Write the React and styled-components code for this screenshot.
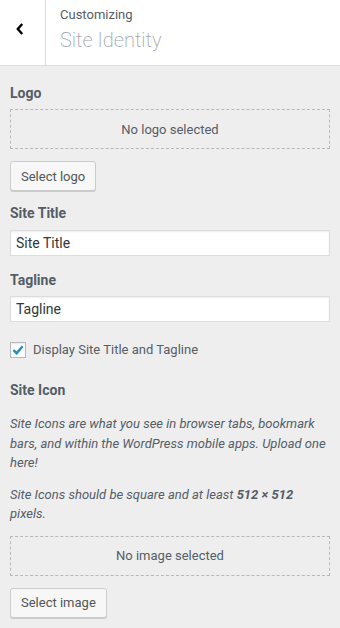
import React from "react";
import styled, { createGlobalStyle } from "styled-components";

const GlobalStyle = createGlobalStyle`
  html, body {
    margin: 0;
    padding: 0;
    background: #eee;
  }
  body {
    font-family: Roboto, "Liberation Sans", sans-serif;
    color: #555d66;
    -webkit-font-smoothing: antialiased;
  }
`;

const Panel = styled.div`
  width: 340px;
  min-height: 628px;
  background: #eee;
`;

const Header = styled.div`
  display: flex;
  height: 65px;
  background: #fff;
  border-bottom: 1px solid #ddd;
`;

const BackButton = styled.button`
  width: 46px;
  height: 65px;
  padding: 0 5px 8px 0;
  border: none;
  border-right: 1px solid #ddd;
  background: #fff;
  display: flex;
  align-items: center;
  justify-content: center;
  cursor: pointer;
`;

const TitleBlock = styled.div`
  display: flex;
  flex-direction: column;
  padding: 6px 0 0 14px;
`;

const Small = styled.span`
  font-size: 13px;
  line-height: 18px;
  color: #555d66;
`;

const Big = styled.h3`
  margin: 3px 0 0;
  font-size: 20px;
  line-height: 26px;
  font-weight: 200;
  color: #a0a5aa;
`;

const Body = styled.div`
  padding: 17px 10px 12px;
`;

const Control = styled.div`
  margin-bottom: ${(p) => p.$mb || 12}px;
`;

const Label = styled.div`
  font-size: 14px;
  line-height: 20px;
  font-weight: 700;
  color: #555d66;
  margin-bottom: ${(p) => p.$mb || 6}px;
`;

const Placeholder = styled.div`
  height: 38px;
  border: 1px dashed #b4b9be;
  display: flex;
  align-items: center;
  justify-content: center;
  font-size: 13px;
  color: #555d66;
  margin-bottom: 12px;
`;

const Button = styled.button`
  height: 30px;
  padding: 0 10px;
  font-family: inherit;
  font-size: 13px;
  color: #555;
  background: #f7f7f7;
  border: 1px solid #ccc;
  border-radius: 3px;
  box-shadow: 0 1px 0 #ccc;
  cursor: pointer;
`;

const Input = styled.input`
  display: block;
  box-sizing: border-box;
  width: 100%;
  height: 26px;
  padding: 3px 5px;
  font-family: inherit;
  font-size: 14px;
  color: #32373c;
  background: #fff;
  border: 1px solid #ddd;
  box-shadow: inset 0 1px 2px rgba(0, 0, 0, 0.07);
  outline: none;
`;

const CheckRow = styled.label`
  display: flex;
  align-items: center;
  gap: 7px;
  font-size: 13px;
  line-height: 20px;
  color: #555d66;
`;

const Box = styled.span`
  width: 16px;
  height: 16px;
  box-sizing: border-box;
  border: 1px solid #b4b9be;
  background: #fff;
  box-shadow: inset 0 1px 2px rgba(0, 0, 0, 0.1);
  display: flex;
  align-items: center;
  justify-content: center;
`;

const Desc = styled.p`
  margin: 0 0 ${(p) => p.$mb || 12}px;
  font-size: 13px;
  line-height: 19.5px;
  font-style: italic;
  color: #555d66;

  strong {
    font-weight: 700;
  }
`;

export default function App() {
  return (
    <Panel>
      <GlobalStyle />
      <Header>
        <BackButton aria-label="Back">
          <svg width="8" height="12" viewBox="0 0 8 12">
            <path
              d="M6.2 1 L1.8 6 L6.2 11"
              fill="none"
              stroke="#000"
              strokeWidth="2.4"
            />
          </svg>
        </BackButton>
        <TitleBlock>
          <Small>Customizing</Small>
          <Big>Site Identity</Big>
        </TitleBlock>
      </Header>

      <Body>
        <Control $mb={12}>
          <Label>Logo</Label>
          <Placeholder>No logo selected</Placeholder>
          <Button>Select logo</Button>
        </Control>

        <Control $mb={14}>
          <Label $mb={7}>Site Title</Label>
          <Input defaultValue="Site Title" />
        </Control>

        <Control $mb={18}>
          <Label $mb={6}>Tagline</Label>
          <Input defaultValue="Tagline" />
        </Control>

        <Control $mb={20}>
          <CheckRow>
            <Box>
              <svg width="14" height="14" viewBox="0 0 14 14">
                <path
                  d="M2.5 7.2 L5.6 10.2 L11.6 3.2"
                  fill="none"
                  stroke="#1e8cbe"
                  strokeWidth="2.4"
                />
              </svg>
            </Box>
            Display Site Title and Tagline
          </CheckRow>
        </Control>

        <Control>
          <Label $mb={14}>Site Icon</Label>
          <Desc>
            Site Icons are what you see in browser tabs, bookmark bars, and
            within the WordPress mobile apps. Upload one here!
          </Desc>
          <Desc>
            Site Icons should be square and at least <strong>512 × 512</strong>{" "}
            pixels.
          </Desc>
          <Placeholder>No image selected</Placeholder>
          <Button>Select image</Button>
        </Control>
      </Body>
    </Panel>
  );
}
